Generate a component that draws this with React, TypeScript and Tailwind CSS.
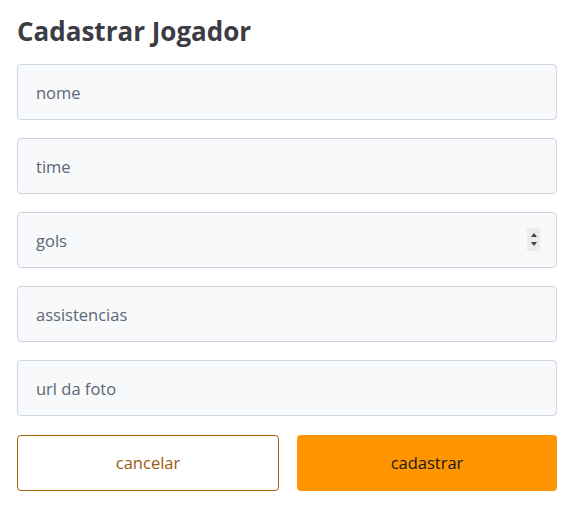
import React from "react";

const fields = [
  { placeholder: "nome", type: "text" },
  { placeholder: "time", type: "text" },
  { placeholder: "gols", type: "number" },
  { placeholder: "assistencias", type: "text" },
  { placeholder: "url da foto", type: "text" },
];

export default function App() {
  return (
    <div className="min-h-screen bg-white px-[17px] pt-[14px] font-['Open_Sans',sans-serif]">
      <div className="w-[540px]">
        <h1 className="text-[26px] font-bold leading-[34px] text-[#3c3c44]">Cadastrar Jogador</h1>
        <form className="mt-[16px] flex flex-col gap-[18px]">
          {fields.map((f) => (
            <div key={f.placeholder} className="relative">
              <input
                type="text"
                placeholder={f.placeholder}
                className="h-[56px] w-full rounded-[4px] border border-[#cfd4e2] bg-[#f8f9fa] px-[18px] text-[16.5px] text-[#333] outline-none placeholder:text-[#5d6675]"
              />
              {f.type === "number" && (
                <div className="pointer-events-none absolute right-[17px] top-[16px] flex h-[23px] w-[13px] flex-col items-center justify-center gap-[5px] bg-[#ececec]">
                  <span className="h-0 w-0 border-x-[3.5px] border-b-[4px] border-x-transparent border-b-[#444]" />
                  <span className="h-0 w-0 border-x-[3.5px] border-t-[4px] border-x-transparent border-t-[#444]" />
                </div>
              )}
            </div>
          ))}
          <div className="mt-px flex gap-[18px]">
            <button
              type="button"
              className="h-[56px] flex-1 rounded-[4px] border border-[#a6600e] bg-white text-[16.5px] text-[#9a5a10]"
            >
              cancelar
            </button>
            <button
              type="button"
              className="h-[56px] flex-1 rounded-[4px] bg-[#ff9500] text-[16.5px] text-[#1a1a1a]"
            >
              cadastrar
            </button>
          </div>
        </form>
      </div>
    </div>
  );
}
